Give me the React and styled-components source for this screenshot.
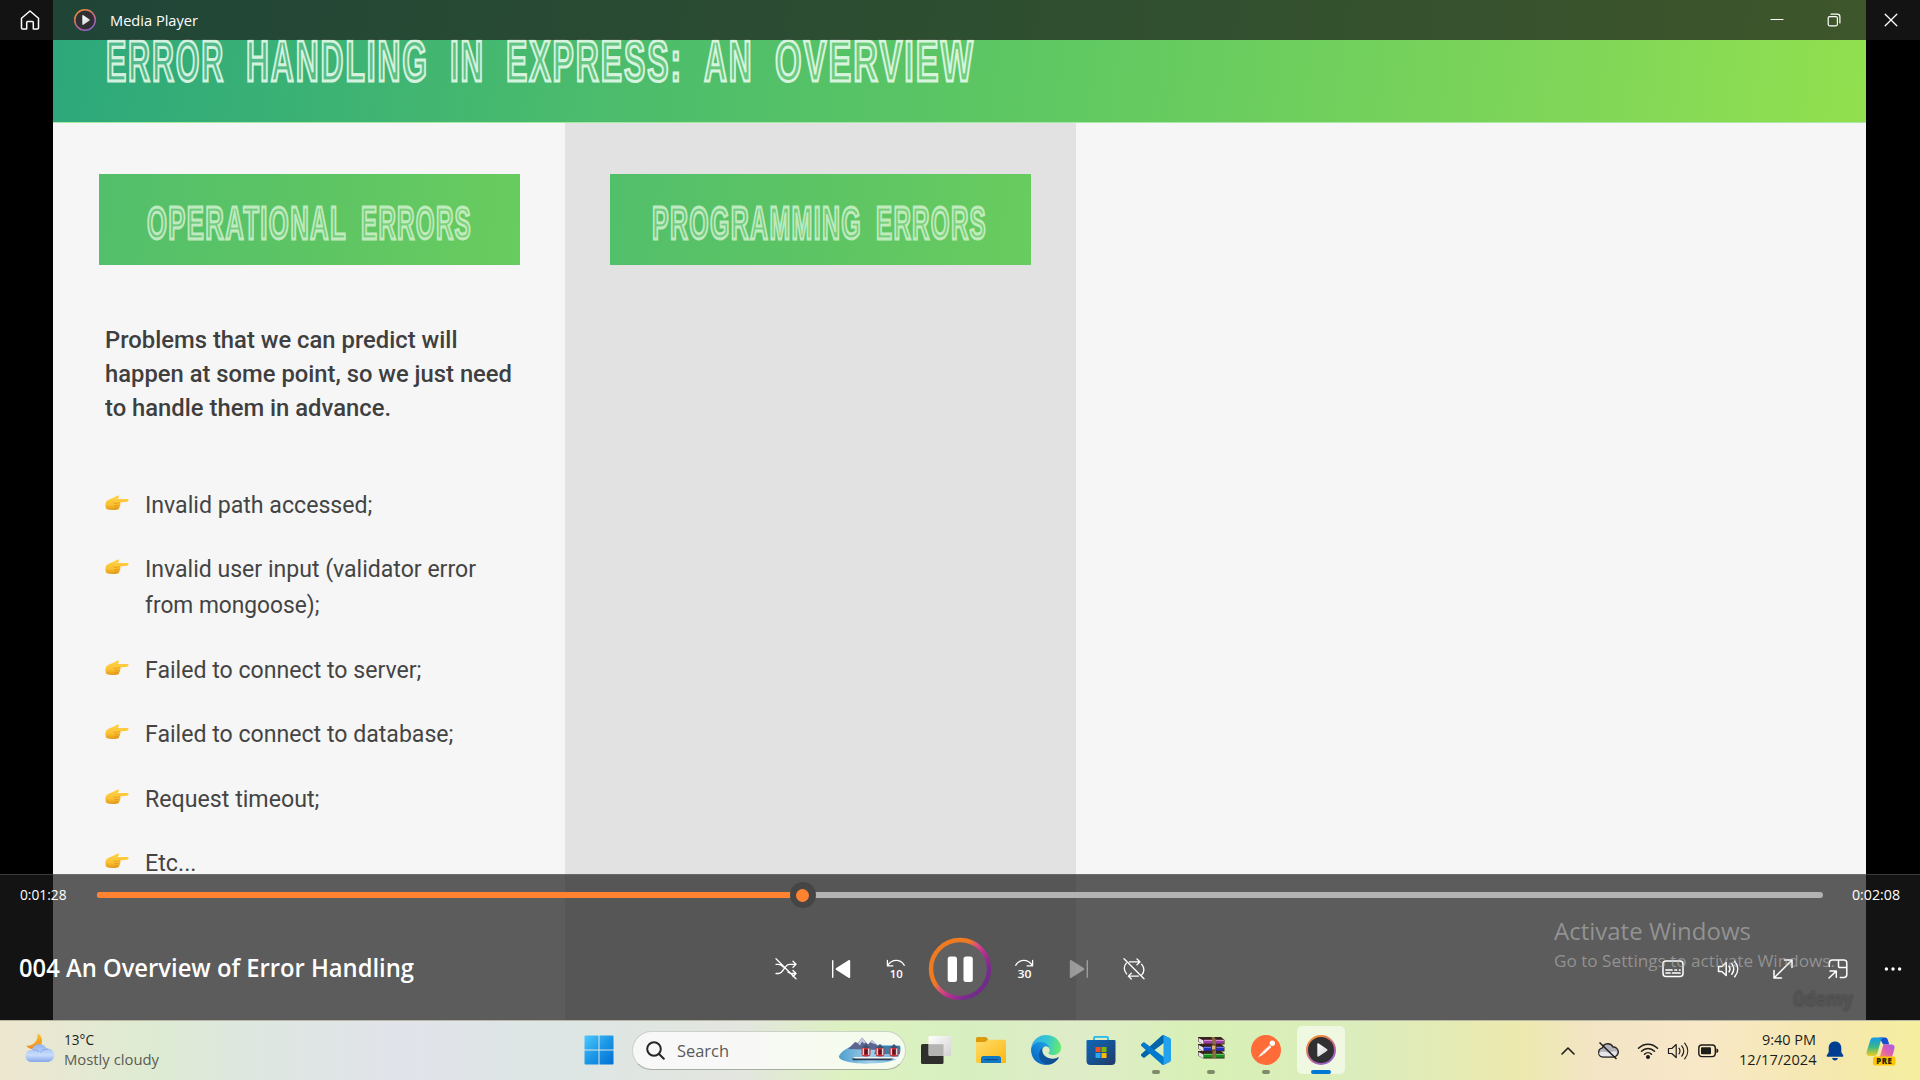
import React, { useLayoutEffect, useRef, useState } from "react";
import styled, { createGlobalStyle, css } from "styled-components";

const Global = createGlobalStyle`
  * { box-sizing: border-box; }
  body { margin: 0; background: #000; overflow: hidden; }
  svg { display: block; flex: none; }
`;

const UI_FONT = `"Open Sans", "Noto Sans", sans-serif`;
const OVERLAY = "rgba(27, 27, 27, 0.7)";

/* Text stretched horizontally so that it takes exactly the given width */
const FitBox = styled.span`
  display: block;
  flex: none;
  width: ${(p) => p.$w}px;
  white-space: nowrap;
`;
const FitInner = styled.span`
  display: inline-block;
  transform-origin: 0 50%;
  vertical-align: top;
`;
function Fit({ w, children }) {
  const ref = useRef(null);
  const [scale, setScale] = useState(1);
  useLayoutEffect(() => {
    const own = ref.current.getBoundingClientRect().width / scale;
    setScale(w / own);
  }, [w]);
  return (
    <FitBox $w={w}>
      <FitInner ref={ref} style={{ transform: `scaleX(${scale})` }}>{children}</FitInner>
    </FitBox>
  );
}

const Screen = styled.div`
  width: 1920px;
  height: 1080px;
  display: flex;
  flex-direction: column;
  overflow: hidden;
  font-family: ${UI_FONT};
`;
const Stage = styled.main`
  position: relative;
  height: 1020px;
  display: flex;
  justify-content: center;
  padding-right: 1px;
  background: #000;
  overflow: hidden;
`;

/* ---------- slide ---------- */
const Slide = styled.section`
  width: 1813px;
  height: 1020px;
  display: flex;
  flex-direction: column;
  background: #f6f6f6;
`;
const SlideHeader = styled.header`
  height: 123px;
  flex: none;
  display: flex;
  padding-left: 53px;
  border-bottom: 1px solid #a9e8a4;
  background: linear-gradient(98deg, #2ca87b 0%, #4abb6d 29%, #5fc862 55%, #80d658 84%, #92e04f 100%);
`;
const Outline = css`
  font-family: "Liberation Sans", Arial, sans-serif;
  font-weight: 700;
  color: rgba(215, 245, 225, 0.2);
`;
const SlideTitle = styled.h1`
  ${Outline}
  margin: 0;
  display: flex;
  gap: 21px;
  font-size: 57px;
  line-height: 123px;
  letter-spacing: 3.5px;
  -webkit-text-stroke: 3.1px rgba(232, 251, 237, 0.88);
`;
const Columns = styled.div`
  flex: 1;
  display: grid;
  grid-template-columns: 512px 511px 1fr;
`;
const Column = styled.div`
  padding: 51px 0 0 ${(p) => p.$pad}px;
  background: ${(p) => (p.$shade ? "#e2e2e2" : "#f6f6f6")};
`;
const Panel = styled.h2`
  ${Outline}
  margin: 0;
  width: 421px;
  height: 91px;
  padding: 4px 0 0 ${(p) => p.$pad}px;
  display: flex;
  gap: 14px;
  font-size: 46px;
  line-height: 91px;
  letter-spacing: 2.5px;
  background: linear-gradient(98deg, #52bf6b, #5ec563 55%, #69cc5f);
  -webkit-text-stroke: 2.9px rgba(216, 244, 212, 0.8);
`;
const Lead = styled.div`
  margin: 57.5px 0 0 6px;
  font: 500 23.5px/34.2px Roboto, sans-serif;
  color: #3f3f3f;
`;
const Bullets = styled.ul`
  list-style: none;
  margin: 61.4px 0 0 6px;
  padding: 0;
  display: flex;
  flex-direction: column;
  gap: 28.5px;
  font: 400 23.5px/36px Roboto, sans-serif;
  color: #444;
`;
const Bullet = styled.li`
  display: flex;
  gap: 15.5px;
  & > svg { margin-top: 8px; }
`;

const Hand = () => (
  <svg width="24" height="16" viewBox="0 0 24 16">
    <defs>
      <linearGradient id="hand" x1="0" y1="0" x2="0" y2="1">
        <stop offset="0" stopColor="#ffd24a" />
        <stop offset="0.6" stopColor="#fcc332" />
        <stop offset="1" stopColor="#e29a1c" />
      </linearGradient>
    </defs>
    <path d="M.8 7.500C2 5 6 4 9 2.600 10.500 1.700 12 .4 13.300.6c1.300.3.7 1.900-.9 3.400l9.700-.1c2 0 2 2.600 0 2.800l-7.100.8c1 .8.9 2-.1 2.500.6 1 .3 1.900-.7 2.300.3 1-.3 1.900-1.400 2.100-3.500.8-8 .9-11.300-.3C.4 12.800.1 9.500.8 7.500z" fill="url(#hand)" />
    <path d="M8.600 8.100c2 .4 4.500.2 6.300-.5M9.500 10.600c1.900.2 3.500 0 5-.5M9.500 12.800c1.500.1 2.800 0 4-.4" stroke="#d98f17" strokeWidth=".7" fill="none" />
  </svg>
);

/* ---------- title bar ---------- */
const TitleBar = styled.div`
  position: absolute;
  inset: 0 0 auto 0;
  height: 40px;
  display: flex;
  align-items: center;
  background: ${OVERLAY};
  color: #fff;
  font-size: 14.700px;
  line-height: 40px;
`;
const TitleCell = styled.div`
  width: ${(p) => p.$w}px;
  height: 40px;
  display: flex;
  align-items: center;
  justify-content: center;
`;
const Grow = styled.div`
  flex: 1;
`;

const MediaLogo = ({ size, id }) => (
  <svg width={size} height={size} viewBox="0 0 30 30">
    <defs>
      <linearGradient id={id} x1="0.2" y1="0" x2="0.8" y2="1">
        <stop offset="0" stopColor="#f59232" />
        <stop offset="0.5" stopColor="#cf6a86" />
        <stop offset="1" stopColor="#8a5fd6" />
      </linearGradient>
      <linearGradient id={id + "p"} x1="0" y1="0" x2="1" y2="1">
        <stop offset="0" stopColor="#fff" />
        <stop offset="1" stopColor="#cfcfcf" />
      </linearGradient>
    </defs>
    <circle cx="15" cy="15" r="14" fill="#303033" stroke={`url(#${id})`} strokeWidth="2" />
    <path d="M11.300 9.200c0-.8.7-1.200 1.400-.8l8.200 5.700c.7.500.7 1.300 0 1.800l-8.200 5.700c-.7.400-1.400 0-1.400-.8z" fill={`url(#${id}p)`} />
  </svg>
);

/* ---------- player controls ---------- */
const Controls = styled.div`
  position: absolute;
  inset: auto 0 0 0;
  height: 146px;
  display: flex;
  flex-direction: column;
  border-top: 1px solid rgba(150, 150, 150, 0.3);
  background: ${OVERLAY};
  color: #fff;
`;
const SeekRow = styled.div`
  height: 40px;
  display: flex;
  align-items: center;
  padding: 0 20px 0 20px;
  font-size: 14.500px;
  line-height: 20px;
`;
const Track = styled.div`
  flex: 1;
  height: 6px;
  margin: 0 29px 0 30.500px;
  display: flex;
  align-items: center;
  border-radius: 3px;
  background: #b3b3b3;
`;
const Played = styled.div`
  height: 6px;
  border-radius: 3px 0 0 3px;
  background: #ff8230;
`;
const Thumb = styled.div`
  flex: none;
  width: 26px;
  height: 26px;
  margin-left: -13px;
  display: grid;
  place-items: center;
  border-radius: 50%;
  background: #454545;
  &::after {
    content: "";
    width: 13px;
    height: 13px;
    border-radius: 50%;
    background: #ff8230;
  }
`;
const ButtonRow = styled.div`
  height: 105px;
  display: grid;
  grid-template-columns: 758px 403px 1fr;
  align-items: start;
`;
const TrackName = styled.div`
  padding-left: 19px;
  font-size: 24.500px;
  font-weight: 600;
  line-height: 105px;
`;
const ButtonGroup = styled.div`
  height: 107px;
  display: flex;
  align-items: center;
  justify-content: ${(p) => (p.$end ? "flex-end" : "flex-start")};
`;
const IconButton = styled.div`
  width: ${(p) => p.$w || 55}px;
  flex: none;
  display: flex;
  justify-content: center;
  opacity: ${(p) => (p.$off ? 0.4 : 1)};
`;

const Stroke = ({ size = 22, w = 1.300, box = 22, children }) => (
  <svg width={size} height={size} viewBox={`0 0 ${box} ${box}`} fill="none" stroke="currentColor" strokeWidth={w} strokeLinecap="round" strokeLinejoin="round">
    {children}
  </svg>
);
const SkipText = styled.text`
  font: 600 11.500px "Open Sans", sans-serif;
  fill: #fff;
  stroke: none;
`;

/* ---------- watermarks ---------- */
const Activate = styled.div`
  position: absolute;
  left: 1554px;
  top: 913px;
  color: rgba(190, 190, 190, 0.56);
  font-size: 24.500px;
  line-height: 36px;
`;
const ActivateSmall = styled.div`
  font-size: 17px;
  line-height: 24px;
`;
const Udemy = styled.div`
  position: absolute;
  left: 1793px;
  top: 984px;
  font: 700 19.500px/28px "Open Sans", sans-serif;
  color: #d6d6d6;
  text-shadow: 0 1px 3px rgba(90, 90, 90, 0.55);
`;

/* ---------- taskbar ---------- */
const Taskbar = styled.footer`
  height: 60px;
  display: grid;
  grid-template-columns: 571px 776px 1fr;
  border-top: 1px solid #b9b7a6;
  color: #1d1d1a;
  background: linear-gradient(90deg, #eee6cf 0, #e4e9d3 90px, #deebd2 150px, #dde7df 240px, #e1e3ea 400px, #dde6e4 560px, #e3e5df 740px, #dcf1bf 850px, #d7efc0 970px, #dfecc9 1080px, #d8f0b6 1200px, #dbedbc 1360px, #ece9ae 1520px, #f3e4c6 1600px, #f8e8c8 1700px, #f5e8ac 1840px, #f5ef9f 1920px);
`;
const Weather = styled.div`
  display: flex;
  gap: 9px;
  padding: 12px 0 0 25px;
`;
const Stack = styled.div`
  display: flex;
  flex-direction: column;
  align-items: ${(p) => (p.$right ? "flex-end" : "flex-start")};
  margin-top: ${(p) => p.$top || 0}px;
  font-size: 14.700px;
  line-height: 20px;
`;
const Muted = styled.div`
  color: #5b5b54;
`;
const Apps = styled.div`
  display: flex;
  align-items: center;
  height: 59px;
`;
const TaskSlot = styled.div`
  width: 55px;
  height: 59px;
  flex: none;
  display: flex;
  flex-direction: column;
  align-items: center;
  padding-top: 5px;
`;
const Tile = styled.div`
  width: 48px;
  height: 48px;
  display: flex;
  flex-direction: column;
  align-items: center;
  justify-content: space-between;
  padding-top: 9px;
  border-radius: 5px;
  background: ${(p) => (p.$active ? "rgba(255,255,255,0.56)" : "none")};
`;
const Mark = styled.div`
  width: ${(p) => (p.$active ? 20 : 8)}px;
  height: 4px;
  border-radius: 2px;
  background: ${(p) => (p.$active ? "#0078d4" : p.$open ? "#7f8b69" : "transparent")};
`;
const SearchBox = styled.div`
  width: 274px;
  height: 39px;
  margin: 0 2px 0 6px;
  display: flex;
  align-items: center;
  flex: none;
  padding: 0 3px 0 13px;
  border-radius: 20px;
  border: 1px solid rgba(110, 120, 100, 0.3);
  border-bottom-color: rgba(90, 100, 80, 0.5);
  background: rgba(255, 255, 255, 0.72);
  color: #5a5a57;
  font-size: 17px;
  line-height: 36px;
`;
const SearchLabel = styled.div`
  flex: 1;
  padding-left: 12px;
`;
const Tray = styled.div`
  height: 59px;
  display: flex;
  align-items: center;
  justify-content: flex-end;
  padding-right: 11px;
`;
const TrayCell = styled.div`
  width: ${(p) => p.$w}px;
  display: flex;
  justify-content: ${(p) => (p.$end ? "flex-end" : "center")};
  padding-right: ${(p) => (p.$end ? 2 : 0)}px;
`;

const WeatherIcon = () => (
  <svg width="30" height="30" viewBox="0 0 30 30">
    <defs>
      <linearGradient id="moon" x1="0" y1="0" x2="0" y2="1"><stop offset="0" stopColor="#f9c02f" /><stop offset="1" stopColor="#ee8b1f" /></linearGradient>
      <linearGradient id="cloud" x1="0" y1="0" x2="0" y2="1"><stop offset="0" stopColor="#8fb4f2" /><stop offset="0.6" stopColor="#c9dcfb" /><stop offset="1" stopColor="#86a7ea" /></linearGradient>
    </defs>
    <path d="M12.500.5c4.500 2 5.800 7.500 3.500 11.500-3 5.200-11 6-15 .5 6 1.500 12.500-4 11.500-12z" fill="url(#moon)" />
    <path d="M6 29a6 6 0 0 1 .8-12A8 8 0 0 1 21.500 15.500 6.800 6.800 0 1 1 23.500 29z" fill="url(#cloud)" />
    <path d="M8 17c2-.7 5 .3 6 2M15.500 19.500c1.500-2.500 4.500-3.800 7.500-3.300" stroke="#7f9fe4" strokeWidth=".9" fill="none" />
  </svg>
);
const StartIcon = () => (
  <svg width="30" height="30" viewBox="0 0 30 30">
    <defs><linearGradient id="win" x1="0" y1="0" x2="1" y2="1"><stop offset="0" stopColor="#4cc9ff" /><stop offset="0.5" stopColor="#1c97e6" /><stop offset="1" stopColor="#0070d2" /></linearGradient></defs>
    <path d="M.5 1.500a1 1 0 0 1 1-1H14.500V14.500H.5zM15.500.5H28.500a1 1 0 0 1 1 1V14.500H15.500zM.5 15.500H14.500V29.500H1.500a1 1 0 0 1-1-1zM15.500 15.500H29.500V28.500a1 1 0 0 1-1 1H15.500z" fill="url(#win)" />
  </svg>
);
const TrainArt = () => (
  <svg width="64" height="28" viewBox="0 0 64 28">
    <defs><linearGradient id="ice" x1="0" y1="0" x2="1" y2="0"><stop offset="0" stopColor="#4f9fcd" /><stop offset="0.5" stopColor="#9fd0ea" /><stop offset="1" stopColor="#6db4dc" /></linearGradient></defs>
    <path d="M1 19C3 14 12 9 20 7l42 1.500c1.500 3 .5 9-3 13-5 5-34 6-42 4.500C8 25 0 22.500 1 19z" fill="url(#ice)" />
    <path d="M10 12 17 5l3 1 4-5.500 6 7 4-4.500 7 7 4 2-1 1z" fill="#5a6690" />
    <path d="M20 6.500l4-6 4 5-2 1-2-2-2 4zM32 5l2-2.500 4 5-3-1z" fill="#c6cbe4" />
    <path d="M40 9h22v8H36z" fill="#3f7da6" />
    <path d="M15 20h44l3 1.500L58 22H18z" fill="#f4f4f6" /><path d="M14 21.500h42l-4 1.800H15z" fill="#2b3a54" />
    {[28, 42, 56].map((x) => (
      <g key={x}>
        <rect x={x - 4.500} y="10.500" width="9" height="9" rx="3" fill="#c8323a" />
        <path d={`M${x - 2.700} 11.500v6.500M${x + 2.700} 11.500v6.500`} stroke="#e4eaf0" strokeWidth="1.200" />
        <rect x={x - 1.500} y="12.500" width="3" height="5" fill="#5c1420" /><path d={`M${x - 4} 11l4-4 4 4z`} fill="#40506e" />
      </g>
    ))}
  </svg>
);
const TaskViewIcon = () => (
  <svg width="30" height="30" viewBox="0 0 30 30">
    <defs><linearGradient id="tv" x1="0" y1="0" x2="1" y2="1"><stop offset="0" stopColor="#fff" /><stop offset="1" stopColor="#d2d2d2" /></linearGradient></defs>
    <rect x="0" y="9" width="22.500" height="20" rx="1.500" fill="#2e2e2c" />
    <rect x="7.500" y="1" width="22.500" height="20" rx="1.500" fill="url(#tv)" />
    <path d="M8 9.300H22.500V21H9a1 1 0 0 1-1-1z" fill="#b4b4b2" />
  </svg>
);
const ExplorerIcon = () => (
  <svg width="30" height="30" viewBox="0 0 30 30">
    <defs><linearGradient id="fold" x1="0" y1="0" x2="1" y2="1"><stop offset="0" stopColor="#ffdc6a" /><stop offset="1" stopColor="#fcb813" /></linearGradient></defs>
    <path d="M0 3.500A1.500 1.500 0 0 1 1.500 2H10l2.500 3L9 10H0z" fill="#dd9a0b" />
    <path d="M0 7h9l3-2.200h16.500A1.500 1.500 0 0 1 30 6.300V28H1.500A1.500 1.500 0 0 1 0 26.500z" fill="url(#fold)" />
    <path d="M5 28v-4.500A2.500 2.500 0 0 1 7.500 21h15a2.500 2.500 0 0 1 2.500 2.500V28z" fill="#1378c4" />
    <path d="M8.500 24.600h13" stroke="#0a4f8d" strokeWidth="1.200" />
  </svg>
);
const EdgeIcon = () => (
  <svg width="30" height="30" viewBox="0 0 256 256">
    <defs>
      <linearGradient id="eg1" x1="63" y1="178" x2="241" y2="178" gradientUnits="userSpaceOnUse"><stop offset="0" stopColor="#0c59a4" /><stop offset="1" stopColor="#114a8b" /></linearGradient>
      <linearGradient id="eg2" x1="160" y1="100" x2="46" y2="225" gradientUnits="userSpaceOnUse"><stop offset="0" stopColor="#1b9de2" /><stop offset="0.500" stopColor="#1384d8" /><stop offset="1" stopColor="#0b6cc4" /></linearGradient>
      <linearGradient id="eg3" x1="10" y1="60" x2="250" y2="110" gradientUnits="userSpaceOnUse"><stop offset="0" stopColor="#2fb0e8" /><stop offset="0.500" stopColor="#36c6d0" /><stop offset="1" stopColor="#66eb6e" /></linearGradient>
    </defs>
    <path fill="url(#eg1)" d="M231 190.500c-3.400 1.800-6.900 3.400-10.500 4.700a101 101 0 0 1-35.900 6.500c-47.300 0-88.500-32.500-88.500-74.300 0-11.400 6.400-21.900 16.400-27.300-42.800 1.800-53.800 46.400-53.800 72.500 0 73.900 68.100 81.400 82.800 81.400 7.900 0 19.800-2.300 27-4.600l1.300-.4a128.300 128.300 0 0 0 66.600-52.800 4 4 0 0 0-5.400-5.700z" />
    <path fill="url(#eg2)" d="M105.700 241.400a79.200 79.200 0 0 1-22.700-21.300 80.700 80.700 0 0 1 29.500-120c3.100-1.500 8.500-4.100 15.600-4a32.400 32.400 0 0 1 25.700 13 31.900 31.900 0 0 1 6.300 18.700c0-.2 24.500-79.600-80-79.600-43.900 0-80 41.700-80 78.200a130.200 130.200 0 0 0 12.100 56 128 128 0 0 0 156.400 67c-18.500 5.900-44.500 3.200-62.900-8z" />
    <path fill="url(#eg3)" d="M152.300 148.900c-.9 1-3.300 2.500-3.300 5.700 0 2.600 1.700 5.200 4.800 7.300 14.400 10.100 41.700 8.700 41.800 8.700 10.700 0 21.300-2.900 30.500-8.300A61.900 61.900 0 0 0 256.600 109c.3-22.400-8-37.300-11.300-43.900C224 23.500 178.200 0 128.300 0a128 128 0 0 0-128 126.200C.8 89.700 37.100 60.200 80.300 60.200c3.500 0 23.500.3 42 10.100 16.300 8.600 24.900 19 30.800 29.200 6.200 10.700 7.300 24.100 7.300 29.500 0 5.300-2.700 13.300-8.100 19.900z" />
  </svg>
);
const StoreIcon = () => (
  <svg width="30" height="30" viewBox="0 0 30 30">
    <defs><linearGradient id="store" x1="0" y1="0" x2="1" y2="1"><stop offset="0" stopColor="#0e68b8" /><stop offset="1" stopColor="#203a68" /></linearGradient></defs>
    <path d="M8 6.500V3a1.200 1.200 0 0 1 1.200-1.200h11.600A1.200 1.200 0 0 1 22 3v3.500" fill="none" stroke="#22b8f0" strokeWidth="1.800" />
    <path d="M.5 6A1 1 0 0 1 1.500 5h27a1 1 0 0 1 1 1v20a4 4 0 0 1-4 4h-21a4 4 0 0 1-4-4z" fill="url(#store)" />
    <path d="M9.500 12h5v5h-5z" fill="#f25022" /><path d="M15.500 12h5v5h-5z" fill="#7fba00" /><path d="M9.500 18h5v5h-5z" fill="#29a8ee" /><path d="M15.500 18h5v5h-5z" fill="#ffb900" />
  </svg>
);
const CodeIcon = () => (
  <svg width="30" height="30" viewBox="0 0 100 100">
    <path d="M96.500 10.800 75.900.9a6.200 6.200 0 0 0-7.100 1.200L1.300 63.600a4.200 4.200 0 0 0 0 6.200l5.500 5a4.200 4.200 0 0 0 5.300.2L93.400 13.400A4.100 4.100 0 0 1 100 16.700v-.3a6.300 6.300 0 0 0-3.500-5.600z" fill="#0065a9" />
    <path d="M96.500 89.200 75.900 99.100a6.200 6.200 0 0 1-7.100-1.200L1.300 36.400a4.200 4.200 0 0 1 0-6.200l5.500-5a4.200 4.200 0 0 1 5.300-.2L93.400 86.600a4.100 4.100 0 0 0 6.600-3.300v.2a6.300 6.300 0 0 1-3.500 5.700z" fill="#007acc" />
    <path d="M75.900 99.100a6.200 6.200 0 0 1-7.100-1.200 3.700 3.700 0 0 0 6.200-2.600V4.700a3.700 3.700 0 0 0-6.200-2.600A6.200 6.200 0 0 1 75.900.9l20.600 9.900A6.200 6.200 0 0 1 100 16.400v67.200a6.200 6.200 0 0 1-3.500 5.600z" fill="#24a2ee" />
  </svg>
);
const WinrarIcon = () => (
  <svg width="30" height="30" viewBox="0 0 30 30">
    {[["#9b3f9e", "#d48ad2", 2], ["#2430c8", "#6a74f4", 9], ["#16901e", "#58c85c", 16]].map(([c, l, y]) => (
      <g key={c}>
        <path d={`M2 ${y}h23l3.500 3v4.500H7L2 ${y + 4.500}z`} fill="#38231f" />
        <path d={`M2.500 ${y + 1}l5 2.500v4l-5-3z`} fill="#e8e2ea" />
        <path d={`M8 ${y + 3}h20v3.600H8z`} fill={c} /><path d={`M8 ${y + 2.800}h20v1.200H8z`} fill={l} />
      </g>
    ))}
    <path d="M15.500 2h3l1.500 3v18h-3.500v-17z" fill="#8b6a3e" /><rect x="15.500" y="10" width="4.500" height="5" rx="1" fill="#d9b36c" stroke="#4b3214" />
  </svg>
);
const PostmanIcon = () => (
  <svg width="30" height="30" viewBox="0 0 30 30">
    <circle cx="15" cy="15" r="15" fill="#ff6c37" />
    <circle cx="21.300" cy="8.300" r="2.700" fill="#fff" />
    <path d="M18.300 10.200 11 17.300l2.200 1.500 7.200-6.800zM10.700 17.500l-4 5.300 6.300-3.900z" fill="#fff" />
    <path d="m12.300 16.200 7-6.200" stroke="#ffb79c" strokeWidth=".8" />
  </svg>
);
const CopilotIcon = () => (
  <svg width="30" height="30" viewBox="0 0 30 30">
    <defs>
      <linearGradient id="cp1" x1="0" y1="0" x2="0" y2="1"><stop offset="0" stopColor="#1597ea" /><stop offset="0.5" stopColor="#37b78b" /><stop offset="1" stopColor="#f0cf1c" /></linearGradient>
      <linearGradient id="cp2" x1="1" y1="0" x2="0" y2="1"><stop offset="0" stopColor="#a65bea" /><stop offset="0.5" stopColor="#e05fb0" /><stop offset="1" stopColor="#ff9351" /></linearGradient>
    </defs>
    <path d="M13 1.500h6c2 0 2.600 1.200 3.200 3.500l1 3.500h-6z" fill="#154fd0" />
    <path d="M7.500 1.500H18c-2 0-2.800 2-3.400 4L11.500 17c-.7 2.300-1.600 3-4 3H4c-2.700 0-4-2-3.200-4.800L4 5c.8-2.400 1.700-3.500 3.500-3.500z" fill="url(#cp1)" />
    <path d="M18 8.500h7.500c2.500 0 3.600 1.700 2.900 4L27 18c-.8 2.500-1.500 3.500-4 3.500H11.500c2 0 2.700-1.500 3.200-3.500l2-7c.4-1.500.6-2.500 1.300-2.500z" fill="url(#cp2)" />
    <rect x="7" y="20.500" width="22.500" height="9" rx="2" fill="#fdc400" />
    <text x="18.200" y="27.800" textAnchor="middle" fontFamily="Open Sans, sans-serif" fontWeight="800" fontSize="7.800" letterSpacing=".5" fill="#2b2200">PRE</text>
  </svg>
);

const Speaker = ({ w, size }) => (
  <Stroke w={w} size={size}>
    <path d="M1.500 8.500v5h3.300l4.400 4V4.500l-4.400 4zM12 8.200c1.200 1.700 1.200 3.900 0 5.600M14.800 5.800c2.400 3.200 2.400 7.200 0 10.400M17.700 3.200c4 4.800 4 10.800 0 15.600" />
  </Stroke>
);

const TITLE_WORDS = [["ERROR", 119], ["HANDLING", 183], ["IN", 35], ["EXPRESS:", 177], ["AN", 49.500], ["OVERVIEW", 200]];
const LEAD = [["Problems that we can predict will", 352.500], ["happen at some point, so we just need", 407], ["to handle them in advance.", 286]];
const ITEMS = [
  [["Invalid path accessed;", 227.500]],
  [["Invalid user input (validator error", 331], ["from mongoose);", 174.500]],
  [["Failed to connect to server;", 276.500]],
  [["Failed to connect to database;", 308.500]],
  [["Request timeout;", 174.500]],
  [["Etc...", 51.500]],
];
const APPS = [
  [TaskViewIcon], [ExplorerIcon], [EdgeIcon], [StoreIcon], [CodeIcon, true], [WinrarIcon, true], [PostmanIcon, true],
  [() => <MediaLogo size={30} id="mlTask" />, true, true],
];

const TaskApp = ({ icon: Icon, open, active }) => (
  <TaskSlot>
    <Tile $active={active}>
      <Icon />
      <Mark $open={open} $active={active} />
    </Tile>
  </TaskSlot>
);

export default function App() {
  return (
    <Screen>
      <Global />
      <Stage>
        <Slide>
          <SlideHeader>
            <SlideTitle>
              {TITLE_WORDS.map(([t, w]) => <Fit key={t} w={w}>{t}</Fit>)}
            </SlideTitle>
          </SlideHeader>
          <Columns>
            <Column $pad={46}>
              <Panel $pad={47.500}>
                <Fit w={200}>OPERATIONAL</Fit>
                <Fit w={111}>ERRORS</Fit>
              </Panel>
              <Lead>
                {LEAD.map(([t, w]) => <Fit key={t} w={w}>{t}</Fit>)}
              </Lead>
              <Bullets>
                {ITEMS.map((lines) => (
                  <Bullet key={lines[0][0]}>
                    <Hand />
                    <div>{lines.map(([t, w]) => <Fit key={t} w={w}>{t}</Fit>)}</div>
                  </Bullet>
                ))}
              </Bullets>
            </Column>
            <Column $shade $pad={45}>
              <Panel $pad={42}>
                <Fit w={210}>PROGRAMMING</Fit>
                <Fit w={111}>ERRORS</Fit>
              </Panel>
            </Column>
            <Column $pad={0} />
          </Columns>
        </Slide>

        <TitleBar>
          <TitleCell $w={60}>
            <Stroke size={20} box={20} w={1.500}><path d="M1.500 8.300 10 1l8.500 7.300V18a1 1 0 0 1-1 1h-4.200v-6.500a1 1 0 0 0-1-1H7.700a1 1 0 0 0-1 1V19H2.500a1 1 0 0 1-1-1z" /></Stroke>
          </TitleCell>
          <TitleCell $w={50}><MediaLogo size={22} id="mlTitle" /></TitleCell>
          <Fit w={88}>Media Player</Fit>
          <Grow />
          <TitleCell $w={57}><Stroke size={14} box={14} w={1.200}><path d="M1 6.500h12" /></Stroke></TitleCell>
          <TitleCell $w={57}><Stroke size={14} box={14} w={1.200}><rect x="1.200" y="3.600" width="9.200" height="9.200" rx="1.500" /><path d="M4 1.200h6.300a2.600 2.600 0 0 1 2.600 2.600V10" /></Stroke></TitleCell>
          <TitleCell $w={58}><Stroke size={14} box={14} w={1.300}><path d="m1.200 1.200 11.600 11.600M12.800 1.200 1.200 12.800" /></Stroke></TitleCell>
        </TitleBar>

        <Udemy><Fit w={60}>ûdemy</Fit></Udemy>

        <Controls>
          <SeekRow>
            <Fit w={46.500}>0:01:28</Fit>
            <Track>
              <Played style={{ width: 705.500 }} />
              <Thumb />
            </Track>
            <Fit w={48}>0:02:08</Fit>
          </SeekRow>
          <ButtonRow>
            <TrackName><Fit w={395}>004 An Overview of Error Handling</Fit></TrackName>
            <ButtonGroup>
              <IconButton>
                <Stroke><path d="M1 6.300h2.500c2.300 0 3.600 1 4.900 2.800M1 15.500h2.500c5.500 0 5.500-9.200 11-9.200h6M18 3.300l3 3-3 3M13 14c1.200 1 2.300 1.500 3.800 1.500h3.700M18 12.500l3 3-3 3M1 .8l20 20" /></Stroke>
              </IconButton>
              <IconButton>
                <svg width="22" height="22" viewBox="0 0 22 22" fill="#fff"><rect x="2" y="2" width="1.400" height="18" rx=".7" /><path d="M18.500 2.300c.9-.6 1.700-.2 1.700.8v15.800c0 1-.8 1.400-1.700.8L6.300 12c-.8-.6-.8-1.400 0-2z" /></svg>
              </IconButton>
              <IconButton>
                <Stroke><path d="M2.400 2.300v5.500h5.500M2.600 7.600C7 .5 15.500.8 19.300 7.300" /><SkipText x="4.800" y="19.800" textLength="13" lengthAdjust="spacingAndGlyphs">10</SkipText></Stroke>
              </IconButton>
              <IconButton $w={73}>
                <svg width="64" height="64" viewBox="0 0 64 64">
                  <defs>
                    <linearGradient id="ring" x1="0.1" y1="0.18" x2="0.9" y2="0.82">
                      <stop offset="0.33" stopColor="#ee7a22" /><stop offset="0.46" stopColor="#dc4f78" /><stop offset="0.64" stopColor="#b42f93" /><stop offset="0.85" stopColor="#7b2c8d" /><stop offset="1" stopColor="#6f2c88" />
                    </linearGradient>
                  </defs>
                  <circle cx="32" cy="32" r="29" fill="#606060" stroke="url(#ring)" strokeWidth="4.500" />
                  <rect x="19.700" y="19.500" width="9.300" height="25.500" rx="2.500" fill="#fff" /><rect x="35.500" y="19.500" width="9.300" height="25.500" rx="2.500" fill="#fff" />
                </svg>
              </IconButton>
              <IconButton>
                <Stroke><path d="M19.600 2.300v5.500h-5.500M19.400 7.600C15 .5 6.500.8 2.700 7.300" /><SkipText x="4.600" y="19.800" textLength="14" lengthAdjust="spacingAndGlyphs">30</SkipText></Stroke>
              </IconButton>
              <IconButton $off>
                <svg width="22" height="22" viewBox="0 0 22 22" fill="#fff"><rect x="18.600" y="2" width="1.400" height="18" rx=".7" /><path d="M3.500 2.300c-.9-.6-1.700-.2-1.700.8v15.800c0 1 .8 1.400 1.700.8L15.700 12c.8-.6.8-1.400 0-2z" /></svg>
              </IconButton>
              <IconButton>
                <Stroke><path d="M1 .8l20 20M6.500 3.900h10.300M14 1l3 2.900-3 2.900M18.600 6.200c3 3.800 2.700 7.700.2 10.700M15.500 18.100H5.600M8.300 15.200l-3 2.900 3 2.900M3.600 15.900C.7 12.200.8 8.200 3.300 5.200" /></Stroke>
              </IconButton>
            </ButtonGroup>
            <ButtonGroup $end>
              <IconButton>
                <Stroke w={1.500}><rect x="1" y="3" width="20" height="15.500" rx="3" /><path d="M4 12h6M13 12h1.500M17.500 12h.5M4 15h4M10.500 15H18" strokeWidth="1.700" /></Stroke>
              </IconButton>
              <IconButton><Speaker w={1.500} size={22} /></IconButton>
              <IconButton>
                <Stroke w={1.500}><path d="M12.500 2h7.500v7.500M20 2 2 20M9.500 20H2v-7.500" /></Stroke>
              </IconButton>
              <IconButton>
                <Stroke w={1.500}><path d="M2.300 8.500V5a3 3 0 0 1 3-3h11.500a3 3 0 0 1 3 3v11.500a3 3 0 0 1-3 3h-3.500M11.500 2v6.500a1 1 0 0 0 1 1h7M3 13h6.300v6.300M9 13.300 2 20" /></Stroke>
              </IconButton>
              <IconButton>
                <svg width="18" height="6" viewBox="0 0 18 6" fill="#fff"><circle cx="2.400" cy="3" r="1.700" /><circle cx="9" cy="3" r="1.700" /><circle cx="15.600" cy="3" r="1.700" /></svg>
              </IconButton>
            </ButtonGroup>
          </ButtonRow>
        </Controls>

        <Activate>
          <Fit w={197}>Activate Windows</Fit>
          <ActivateSmall><Fit w={281}>Go to Settings to activate Windows.</Fit></ActivateSmall>
        </Activate>
      </Stage>

      <Taskbar>
        <Weather>
          <WeatherIcon />
          <Stack $top={-4}>
            <Fit w={30}>13°C</Fit>
            <Muted><Fit w={95}>Mostly cloudy</Fit></Muted>
          </Stack>
        </Weather>
        <Apps>
          <TaskApp icon={StartIcon} />
          <SearchBox>
            <svg width="19" height="19" viewBox="0 0 19 19" fill="none" stroke="#262624" strokeWidth="2"><circle cx="8" cy="8" r="6.800" /><path d="m12.800 12.800 5 5" strokeLinecap="round" /></svg>
            <SearchLabel><Fit w={52}>Search</Fit></SearchLabel>
            <TrainArt />
          </SearchBox>
          {APPS.map(([icon, open, active], i) => <TaskApp key={i} icon={icon} open={open} active={active} />)}
        </Apps>
        <Tray>
          <TrayCell $w={40}><Stroke size={14} box={14} w={1.600}><path d="m1 10 6-6 6 6" /></Stroke></TrayCell>
          <TrayCell $w={40}>
            <svg width="22" height="18" viewBox="0 0 22 18"><path d="M6 15a4.600 4.600 0 0 1-.6-9.100A5.700 5.700 0 0 1 16 5a5 5 0 0 1 .6 10z" fill="#b4b4ba" stroke="#2a2a28" strokeWidth="1.400" /><path d="M2 11c4-3 8 .5 12-1 2-.8 5-1 6 0-.5 2.500-1.500 4.300-3.500 4.300H6c-2 0-3.500-1-4-3.300z" fill="#e6e6ea" /><path d="m2.500.5 17 16.500" stroke="#1c1c1a" strokeWidth="1.500" /></svg>
          </TrayCell>
          <TrayCell $w={40}>
            <Stroke size={22} w={1.500}><path d="M1.500 8.300c5.400-5.400 13.600-5.400 19 0M4.500 11.300c3.700-3.700 9.300-3.700 13 0M7.500 14.200c2-2 5-2 7 0" /><circle cx="11" cy="17" r="1.300" fill="currentColor" /></Stroke>
          </TrayCell>
          <TrayCell $w={20}><Speaker w={1.200} size={22} /></TrayCell>
          <TrayCell $w={40}>
            <svg width="21" height="14" viewBox="0 0 21 14"><rect x=".8" y="1" width="16.500" height="11.600" rx="3" fill="none" stroke="#1d1d1a" strokeWidth="1.400" /><rect x="3" y="3.300" width="10" height="7" rx="1" fill="#1d1d1a" /><path d="M18.400 4.500c2.600.4 2.600 4.200 0 4.600z" fill="#1d1d1a" /></svg>
          </TrayCell>
          <TrayCell $w={90} $end>
            <Stack $right $top={-3}>
              <Fit w={54}>9:40 PM</Fit>
              <Fit w={77.500}>12/17/2024</Fit>
            </Stack>
          </TrayCell>
          <TrayCell $w={34}>
            <svg width="18" height="20" viewBox="0 0 18 20" fill="#003e92"><path d="M9 .5c3.700 0 6.300 2.700 6.300 6.300v4.400l1.900 3c.4.800 0 1.500-.8 1.500H1.600c-.8 0-1.200-.7-.8-1.500l1.900-3V6.800C2.700 3.200 5.300.5 9 .5zM6 17h6c-.6 1.700-1.600 2.500-3 2.500S6.600 18.700 6 17z" /></svg>
          </TrayCell>
          <TrayCell $w={57}><CopilotIcon /></TrayCell>
        </Tray>
      </Taskbar>
    </Screen>
  );
}
